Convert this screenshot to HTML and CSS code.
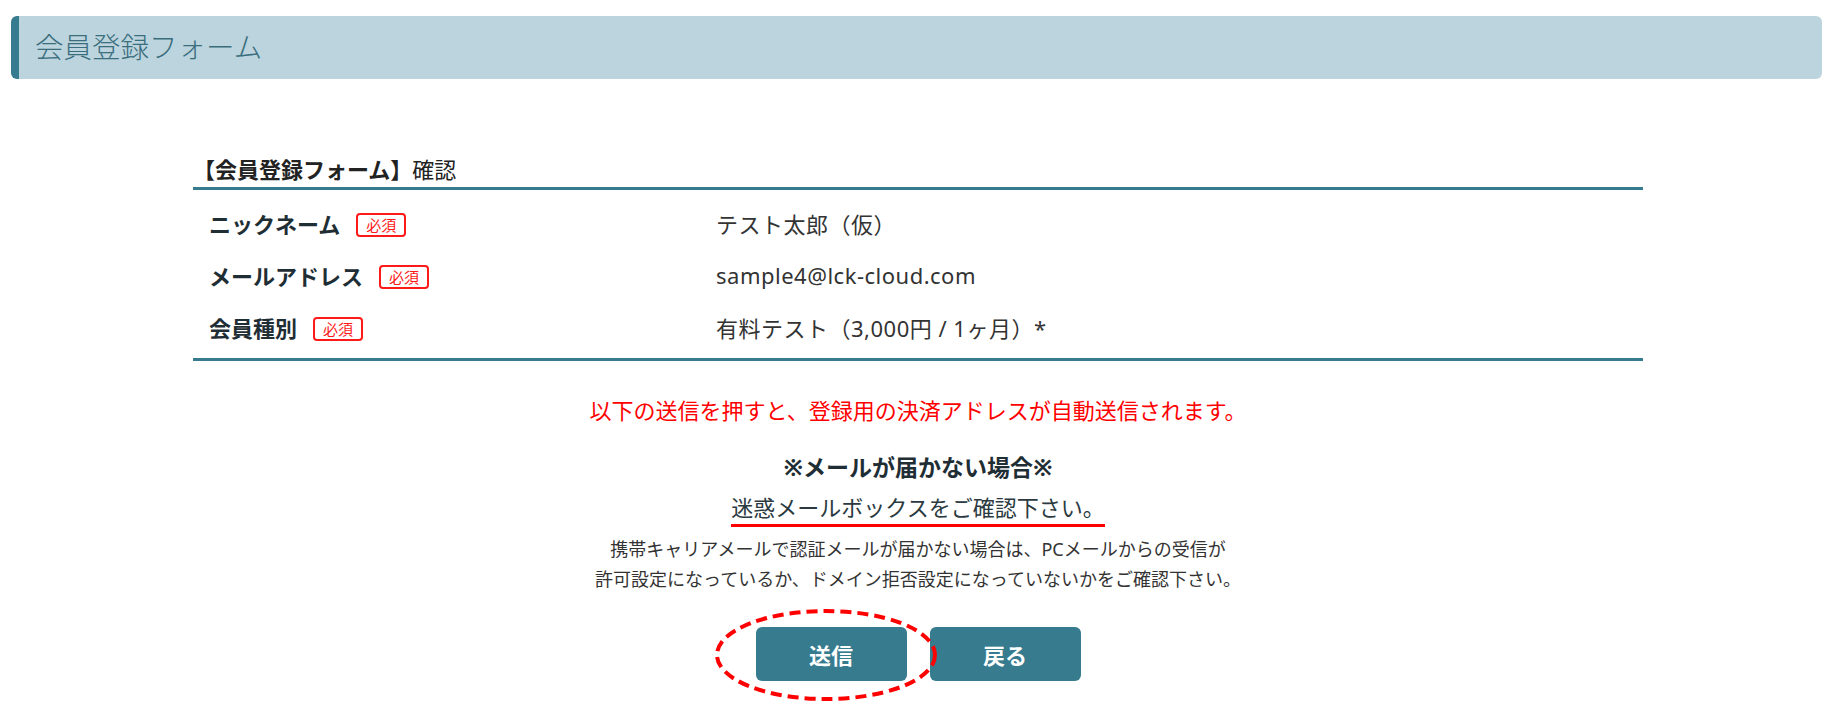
FILE: index.html
```html
<!DOCTYPE html>
<html lang="ja">
<head>
<meta charset="utf-8">
<title>会員登録フォーム</title>
<link rel="stylesheet" href="styles.css">
</head>
<body>
<header class="page-head">
  <h1 class="page-title">会員登録フォーム</h1>
</header>
<main class="confirm">
  <h2 class="confirm-title"><strong>【会員登録フォーム】</strong>確認</h2>
  <div class="confirm-table">
    <div class="row">
      <div class="label">ニックネーム<span class="req">必須</span></div>
      <div class="value">テスト太郎（仮）</div>
    </div>
    <div class="row">
      <div class="label">メールアドレス<span class="req">必須</span></div>
      <div class="value">sample4@lck-cloud.com</div>
    </div>
    <div class="row">
      <div class="label">会員種別<span class="req">必須</span></div>
      <div class="value">有料テスト（3,000円 / 1ヶ月）*</div>
    </div>
  </div>
  <p class="notice-red">以下の送信を押すと、登録用の決済アドレスが自動送信されます。</p>
  <p class="notice-head">※メールが届かない場合※</p>
  <p class="notice-spam"><span class="underline">迷惑メールボックスをご確認下さい。</span></p>
  <p class="notice-small">携帯キャリアメールで認証メールが届かない場合は、PCメールからの受信が<br>許可設定になっているか、ドメイン拒否設定になっていないかをご確認下さい。</p>
  <div class="actions">
    <div class="send-wrap">
      <button class="btn" type="button">送信</button>
      <svg class="circle-mark" width="226" height="96" viewBox="0 0 226 96" aria-hidden="true">
        <ellipse cx="113" cy="48" rx="109" ry="44" fill="none" stroke="#ff0000" stroke-width="4" stroke-dasharray="11 6"/>
      </svg>
    </div>
    <button class="btn" type="button">戻る</button>
  </div>
</main>
</body>
</html>
```

FILE: styles.css
```css
* {
  box-sizing: border-box;
}

body {
  margin: 0;
  background: #ffffff;
  font-family: "Noto Sans", "Noto Sans CJK JP", sans-serif;
  color: #333333;
}

.page-head {
  margin: 16px 14px 0 11px;
  height: 63px;
  background: #bcd4dd;
  border-left: 8px solid #367b8e;
  border-radius: 6px;
  padding-left: 16px;
  display: flex;
  align-items: center;
}

.page-title {
  margin: 0;
  font-size: 28.5px;
  font-weight: 300;
  line-height: 1;
  color: #3a6e7d;
}

.confirm {
  width: 1450px;
  margin: 75px auto 0;
  padding-bottom: 38px;
}

.confirm-title {
  margin: 0;
  font-size: 22px;
  line-height: 30px;
  font-weight: 400;
  color: #222222;
  padding-bottom: 3px;
  border-bottom: 3px solid #367b8e;
}

.confirm-title strong {
  font-weight: 700;
}

.confirm-table {
  padding: 7px 0 5px;
  border-bottom: 3px solid #367b8e;
}

.row {
  display: grid;
  grid-template-columns: 523px 1fr;
  height: 52px;
  align-items: center;
}

.label {
  padding-left: 16px;
  font-size: 22px;
  font-weight: 700;
  color: #1f2e35;
  display: flex;
  align-items: center;
}

.req {
  display: inline-block;
  margin-left: 16px;
  margin-top: 3px;
  width: 50px;
  height: 24px;
  border: 2px solid #ff1a1a;
  border-radius: 4px;
  color: #ff1a1a;
  font-size: 15px;
  font-weight: 400;
  line-height: 20px;
  text-align: center;
}

.value {
  font-size: 22px;
  letter-spacing: 0.5px;
  color: #333333;
}

.notice-red {
  margin: 34px 0 0;
  text-align: center;
  font-size: 22px;
  line-height: 30px;
  color: #ff0000;
}

.notice-head {
  margin: 27px 0 0;
  text-align: center;
  font-size: 23px;
  font-weight: 700;
  line-height: 30px;
  color: #1f2e35;
}

.notice-spam {
  margin: 10px 0 0;
  text-align: center;
  font-size: 22px;
  line-height: 30px;
  color: #2a3a40;
}

.underline {
  display: inline-block;
  padding-bottom: 2px;
  border-bottom: 3px solid #ff0000;
}

.notice-small {
  margin: 7px 0 0;
  text-align: center;
  font-size: 18px;
  line-height: 30px;
  color: #333333;
}

.actions {
  margin-top: 33px;
  display: flex;
  justify-content: center;
  gap: 23px;
}

.send-wrap {
  position: relative;
}

.btn {
  display: block;
  width: 151px;
  height: 54px;
  border: none;
  border-radius: 6px;
  background: #367b8e;
  color: #ffffff;
  font-family: "Noto Sans", "Noto Sans CJK JP", sans-serif;
  font-size: 22px;
  font-weight: 700;
  cursor: pointer;
}

.circle-mark {
  position: absolute;
  left: -43px;
  top: -20px;
  z-index: 1;
  pointer-events: none;
}
```
